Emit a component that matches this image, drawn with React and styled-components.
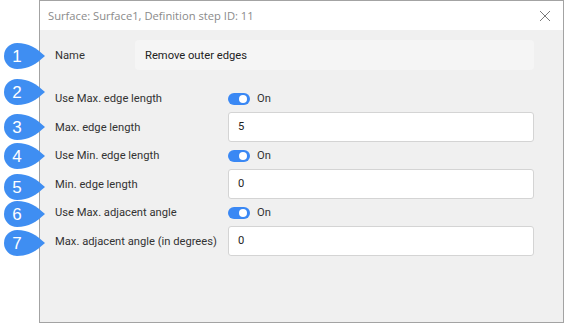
import { Fragment } from 'react';
import styled, { createGlobalStyle } from 'styled-components';

const GlobalStyle = createGlobalStyle`
  html, body {
    margin: 0;
    padding: 0;
    background: #ffffff;
  }
  body {
    font-family: Roboto, "Liberation Sans", sans-serif;
  }
`;

const Page = styled.div`
  position: relative;
  width: 564px;
  height: 324px;
  overflow: hidden;
  padding-left: 39px;
  box-sizing: border-box;
`;

const Dialog = styled.div`
  width: 525px;
  height: 323px;
  box-sizing: border-box;
  border: 1px solid #a3a3a3;
  display: flex;
  flex-direction: column;
  background: #f0f0f0;
`;

const TitleBar = styled.div`
  height: 29px;
  flex: none;
  background: #ffffff;
  display: flex;
  align-items: center;
  justify-content: space-between;
  padding: 0 10px 0 8px;
`;

const Title = styled.span`
  font-family: "Open Sans", "Noto Sans", sans-serif;
  font-size: 11.2px;
  color: #8a8a8a;
`;

const CloseButton = styled.button`
  width: 16px;
  height: 16px;
  padding: 0;
  border: none;
  background: transparent;
  display: flex;
  align-items: center;
  justify-content: center;
`;

const Body = styled.div`
  padding: 10px 29px 0 15px;
  display: flex;
  flex-direction: column;
`;

const NameRow = styled.div`
  display: flex;
  align-items: center;
  height: 30px;
  margin-bottom: 15px;
`;

const NameLabel = styled.span`
  width: 80px;
  font-size: 11.2px;
  color: #333333;
`;

const NameField = styled.div`
  flex: 1;
  height: 30px;
  background: #f5f5f5;
  border-radius: 4px;
  display: flex;
  align-items: center;
  padding: 0 10px;
  font-size: 11.2px;
  color: #222222;
`;

const Grid = styled.div`
  display: grid;
  grid-template-columns: 173px 1fr;
`;

const Label = styled.span`
  display: flex;
  align-items: center;
  height: ${p => (p.$input ? 30 : 27)}px;
  font-size: 11.2px;
  color: #333333;
`;

const ToggleCell = styled.div`
  display: flex;
  align-items: center;
  gap: 7px;
  height: 27px;
  font-size: 11.2px;
  color: #333333;
`;

const Switch = styled.span`
  position: relative;
  width: 22px;
  height: 12px;
  border-radius: 6px;
  background: #3a88f4;

  &::after {
    content: '';
    position: absolute;
    top: 2px;
    right: 3px;
    width: 8px;
    height: 8px;
    border-radius: 50%;
    background: #ffffff;
  }
`;

const Input = styled.div`
  height: 30px;
  box-sizing: border-box;
  background: #ffffff;
  border: 1px solid #d4d4d4;
  border-radius: 3px;
  display: flex;
  align-items: center;
  padding: 0 9px 2px;
  font-size: 11.2px;
  color: #222222;
`;

const Callout = styled.svg`
  position: absolute;
  left: 0;
  width: 46px;
  height: 28px;
  overflow: visible;
`;

const CalloutNumber = styled.text`
  font-family: "Liberation Sans", Arial, sans-serif;
  font-size: 17px;
  fill: #ffffff;
`;

const rows = [
  { label: 'Use Max. edge length', type: 'toggle' },
  { label: 'Max. edge length', type: 'input', value: '5' },
  { label: 'Use Min. edge length', type: 'toggle' },
  { label: 'Min. edge length', type: 'input', value: '0' },
  { label: 'Use Max. adjacent angle', type: 'toggle' },
  { label: 'Max. adjacent angle (in degrees)', type: 'input', value: '0' },
];

const callouts = [56, 92, 127, 156, 187, 214, 243];

const Bubble = ({ n, y }) => (
  <Callout style={{ top: y - 14 }} viewBox="0 0 46 28">
    <path
      d="M45 14 C36 22 29 27 17 27 A13 13 0 0 1 17 1 C29 1 36 6 45 14 Z"
      fill="#3f8ef2"
    />
    <CalloutNumber x="17" y="20" textAnchor="middle">{n}</CalloutNumber>
  </Callout>
);

export default function App() {
  return (
    <>
      <GlobalStyle />
      <Page>
        <Dialog>
          <TitleBar>
            <Title>Surface: Surface1, Definition step ID: 11</Title>
            <CloseButton aria-label="Close">
              <svg width="12" height="12" viewBox="0 0 12 12">
                <path d="M1 1 L11 11 M11 1 L1 11" stroke="#7a7a7a" strokeWidth="1" />
              </svg>
            </CloseButton>
          </TitleBar>
          <Body>
            <NameRow>
              <NameLabel>Name</NameLabel>
              <NameField>Remove outer edges</NameField>
            </NameRow>
            <Grid>
              {rows.map(r => (
                <Fragment key={r.label}>
                  <Label $input={r.type === 'input'}>{r.label}</Label>
                  {r.type === 'toggle' ? (
                    <ToggleCell>
                      <Switch />
                      On
                    </ToggleCell>
                  ) : (
                    <Input>{r.value}</Input>
                  )}
                </Fragment>
              ))}
            </Grid>
          </Body>
        </Dialog>
        {callouts.map((y, i) => (
          <Bubble key={i} n={i + 1} y={y} />
        ))}
      </Page>
    </>
  );
}
